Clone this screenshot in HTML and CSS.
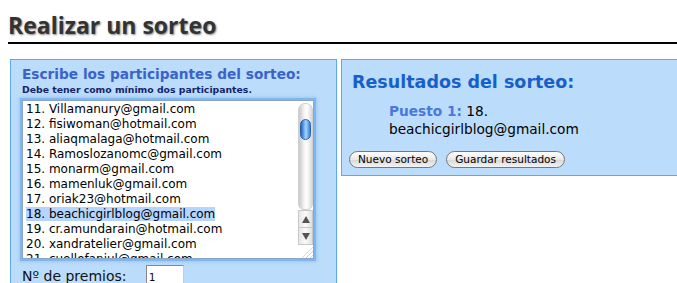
FILE: index.html
```html
<!DOCTYPE html>
<html>
  <head>
    <title>Realizar un sorteo</title>
    <link rel="stylesheet" href="styles.css">
  </head>

  <body>
    <h1 class="page-title">Realizar un sorteo</h1>

    <div class="panels">
      <div class="box entry">
        <h2 class="entry-title">Escribe los participantes del sorteo:</h2>
        <p class="hint">Debe tener como mínimo dos participantes.</p>

        <div class="listbox">
          <div class="lines">
            <div>11. Villamanury@gmail.com</div>
            <div>12. fisiwoman@hotmail.com</div>
            <div>13. aliaqmalaga@hotmail.com</div>
            <div>14. Ramoslozanomc@gmail.com</div>
            <div>15. monarm@gmail.com</div>
            <div>16. mamenluk@gmail.com</div>
            <div>17. oriak23@hotmail.com</div>
            <div><span class="picked">18. beachicgirlblog@gmail.com</span></div>
            <div>19. cr.amundarain@hotmail.com</div>
            <div>20. xandratelier@gmail.com</div>
            <div>21. cuellofaniul@gmail.com</div>
          </div>
          <div class="scrollbar">
            <div class="track"><div class="thumb"></div></div>
            <div class="arrow up"></div>
            <div class="arrow down"></div>
            <div class="grip"></div>
          </div>
        </div>

        <div class="prizes">
          <label>Nº de premios:</label>
          <input class="prize-count" type="text" value="1">
        </div>
      </div>

      <div class="box results">
        <h2 class="results-title">Resultados del sorteo:</h2>
        <p class="winner"><b>Puesto 1:</b> 18. beachicgirlblog@gmail.com</p>
        <div class="actions">
          <button class="aqua">Nuevo sorteo</button>
          <button class="aqua">Guardar resultados</button>
        </div>
      </div>
    </div>
  </body>
</html>
```

FILE: styles.css
```css
html {
  overflow: hidden;
}
body {
  margin: 0 0 0 8px;
  width: 700px;
  font-family: "DejaVu Sans", Verdana, sans-serif;
  background: #fff;
}

.page-title {
  margin: 13px 0 0 -1px;
  padding: 0 0 5px 1px;
  font-family: "Open Sans", sans-serif;
  font-size: 23px;
  font-weight: bold;
  line-height: 24px;
  color: #333;
  text-shadow: 1px 1px 2px #888;
  border-bottom: 2px solid #000;
}

.panels {
  display: flex;
  align-items: flex-start;
  gap: 4px;
  margin: 15px 0 0 2px;
}

.box {
  background: #bbdcfb;
  border: 1px solid #5ba8f4;
}

.entry {
  width: 303px;
  height: 240px;
  padding: 5px 11px 0;
}
.entry-title {
  margin: 0;
  font-size: 13.7px;
  line-height: 18px;
  color: #3a63ca;
}
.hint {
  margin: 1px 0 0;
  font-size: 9.3px;
  font-weight: bold;
  line-height: 12px;
  color: #14246c;
}

.listbox {
  display: flex;
  margin: 4px 0 0;
  height: 157px;
  width: 290px;
  background: #fff;
  border: 1px solid #8aa6c4;
  box-shadow: 0 0 0 2px #7fb6f0, 0 0 3px 3px #9cc8f4;
  overflow: hidden;
}
.lines {
  flex: 1;
  padding: 1px 0 0 3px;
  font-size: 12px;
  line-height: 15px;
  color: #000;
  white-space: nowrap;
}
.picked {
  background: #b5d5ff;
}

.scrollbar {
  width: 15px;
  display: flex;
  flex-direction: column;
  background: #fff;
}
.track {
  box-sizing: border-box;
  margin-top: 2px;
  height: 107px;
  border-radius: 7px 7px 6px 6px;
  background: linear-gradient(90deg, #c8c8c8, #f4f4f4 40%, #ffffff 60%, #d8d8d8);
  border: 1px solid #d0d0d0;
  padding-top: 15px;
}
.thumb {
  margin: 0 1px;
  height: 19px;
  border-radius: 6px;
  background: linear-gradient(90deg, #1f5fb8, #6fb0f0 35%, #a8d4fb 55%, #3a80d8);
  border: 1px solid #2c64b0;
}
.arrow {
  height: 16px;
  border: 1px solid #c8c8c8;
  border-top: none;
  background: linear-gradient(90deg, #e6e6e6, #fafafa 50%, #e0e0e0);
  display: flex;
  align-items: center;
  justify-content: center;
}
.arrow.up {
  border-top: 1px solid #c8c8c8;
}
.arrow.up::before {
  content: "";
  border-left: 4px solid transparent;
  border-right: 4px solid transparent;
  border-bottom: 7px solid #555;
}
.arrow.down::before {
  content: "";
  border-left: 4px solid transparent;
  border-right: 4px solid transparent;
  border-top: 7px solid #555;
}
.grip {
  flex: 1;
  background: linear-gradient(135deg, transparent 60%, #999 62%, transparent 64%, transparent 74%, #999 76%, transparent 78%, transparent 86%, #999 88%, transparent 90%);
}

.prizes {
  display: flex;
  align-items: flex-start;
  margin: 6px 0 0;
}
.prizes label {
  width: 124px;
  padding-top: 3px;
  font-size: 14px;
  color: #111;
}
.prize-count {
  width: 32px;
  height: 20px;
  padding: 1px 2px;
  border: 1px solid #888;
  border-right-color: #ccc;
  font-family: "DejaVu Sans", sans-serif;
  font-size: 10px;
}

.results {
  flex: 1;
  height: 103px;
  padding: 12px 10px 0;
}
.results-title {
  margin: 0;
  font-size: 17.5px;
  line-height: 20px;
  color: #1760c9;
}
.winner {
  margin: 10px 0 0 37px;
  width: 210px;
  font-size: 13.7px;
  line-height: 18px;
  color: #000;
}
.winner b {
  color: #4a78da;
}
.actions {
  display: flex;
  gap: 9px;
  margin: 13px 0 0 -3px;
}
.aqua {
  height: 17px;
  padding: 0 8px;
  border: 1px solid #777;
  border-radius: 9px;
  background: linear-gradient(#ffffff, #e8e8e8 50%, #d6d6d6 51%, #f4f4f4);
  font-family: "DejaVu Sans", sans-serif;
  font-size: 10.5px;
  color: #000;
  line-height: 15px;
}
```
